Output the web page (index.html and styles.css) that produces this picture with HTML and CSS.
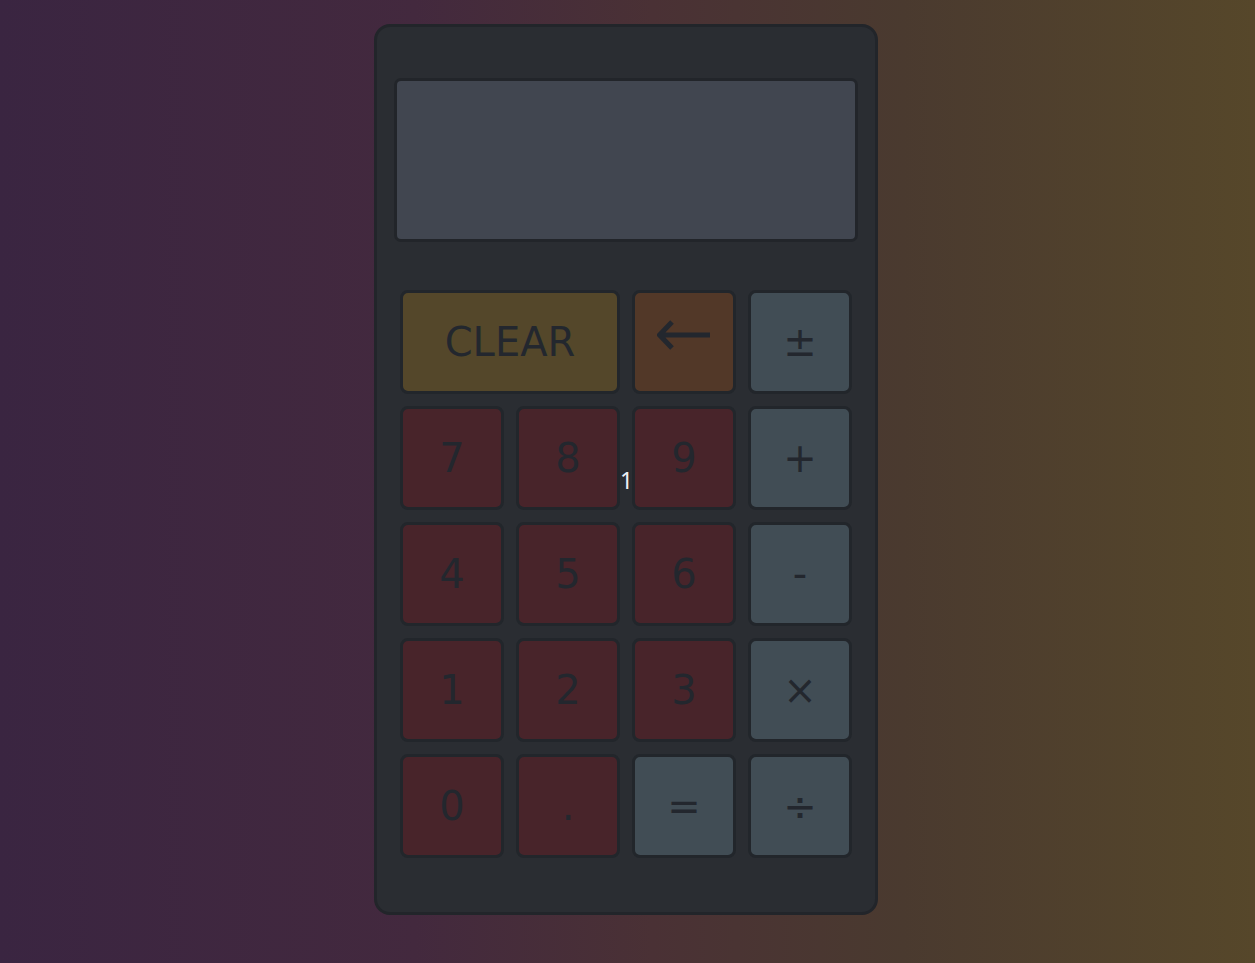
FILE: index.html
```html
<!DOCTYPE html>
<html>
<head>
<meta charset="utf-8">
<link rel="stylesheet" href="styles.css">
</head>
<body>
<div class="calc">
  <div class="display"></div>
  <div class="stray">1</div>
  <div class="keys">
    <button class="key wide clear">CLEAR</button>
    <button class="key back"><svg width="54" height="30" viewBox="0 0 54 30"><path d="M2 15 H53 M15 2 L2.5 15 L15 28" fill="none" stroke="#23272e" stroke-width="5"/></svg></button>
    <button class="key op">±</button>
    <button class="key num">7</button>
    <button class="key num">8</button>
    <button class="key num">9</button>
    <button class="key op">+</button>
    <button class="key num">4</button>
    <button class="key num">5</button>
    <button class="key num">6</button>
    <button class="key op">-</button>
    <button class="key num">1</button>
    <button class="key num">2</button>
    <button class="key num">3</button>
    <button class="key op">×</button>
    <button class="key num">0</button>
    <button class="key num">.</button>
    <button class="key op">=</button>
    <button class="key op">÷</button>
  </div>
</div>
</body>
</html>
```
FILE: styles.css
```css
html, body {
  margin: 0;
  height: 100%;
}
body {
  background: linear-gradient(to right, #3a2541 0%, #43293e 33%, #4a3135 52%, #4a3a2f 72%, #56472a 100%);
  font-family: "DejaVu Sans", sans-serif;
  display: flex;
  justify-content: center;
  align-items: flex-start;
  padding-top: 24px;
  box-sizing: border-box;
}
.calc {
  position: relative;
  width: 504px;
  height: 891px;
  box-sizing: border-box;
  background: #2a2d32;
  border: 3px solid #22252a;
  border-radius: 16px;
  padding: 51px 17px 0 17px;
  display: flex;
  flex-direction: column;
  align-items: center;
  margin-left: -3px;
}
.display {
  width: 464px;
  height: 164px;
  box-sizing: border-box;
  background: #414650;
  border: 3px solid #22252a;
  border-radius: 7px;
}
.stray {
  position: absolute;
  left: 243px;
  top: 442px;
  color: #eef0f4;
  font-family: "Noto Sans", sans-serif;
  font-size: 23px;
  line-height: 1;
}
.keys {
  margin-top: 48px;
  display: grid;
  grid-template-columns: repeat(4, 104px);
  grid-auto-rows: 104px;
  column-gap: 12px;
  row-gap: 12px;
}
.key {
  box-sizing: border-box;
  border: 3px solid #22262b;
  border-radius: 8px;
  font-family: "DejaVu Sans", sans-serif;
  font-size: 40px;
  color: #23272e;
  display: flex;
  align-items: center;
  justify-content: center;
  padding: 0;
  margin: 0;
}
.wide { grid-column: span 2; }
.clear { background: #54472a; }
.back { background: #523828; }
.back svg { margin-top: -14px; }
.op { background: #414d55; }
.num { background: #48242a; }
```
